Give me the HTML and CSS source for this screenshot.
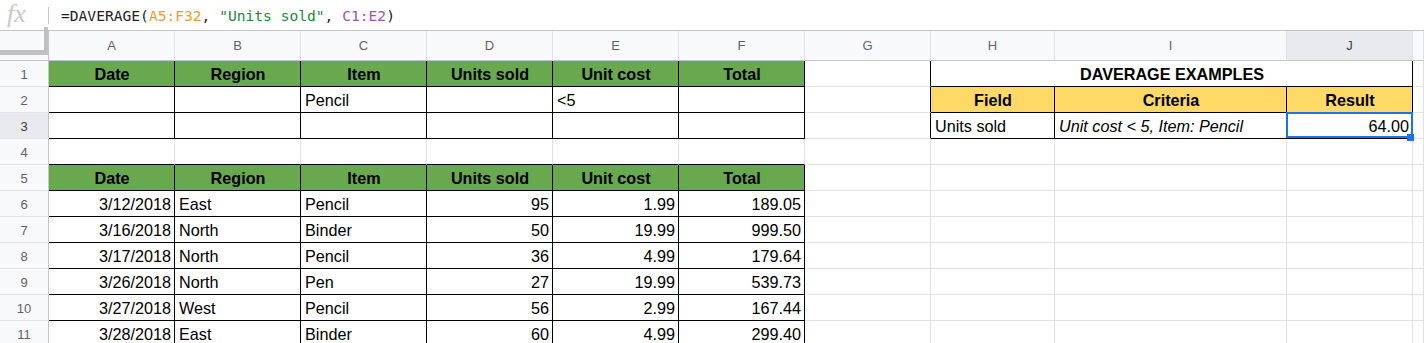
FILE: index.html
```html
<!DOCTYPE html>
<html lang="en">
<head>
  <meta charset="UTF-8" />
  <title>DAVERAGE - Sheet</title>
  <link rel="stylesheet" href="styles.css">
</head>
<body>

  <div id="formulaBar">
    <span class="fx">fx</span>
    <span class="sep"></span>
    <span class="formula">=DAVERAGE(<span class="ref1">A5:F32</span>, <span class="str">"Units sold"</span>, <span class="ref2">C1:E2</span>)</span>
  </div>

  <div id="sheet">
    <!-- column headers -->
    <div class="corner"><div class="freeze"></div></div>
    <div class="ch">A</div><div class="ch">B</div><div class="ch">C</div><div class="ch">D</div>
    <div class="ch">E</div><div class="ch">F</div><div class="ch">G</div><div class="ch">H</div>
    <div class="ch">I</div><div class="ch sel">J</div><div class="ch"></div>

    <!-- row 1 -->
    <div class="rh">1</div>
    <div class="c g bd">Date</div><div class="c g bd">Region</div><div class="c g bd">Item</div>
    <div class="c g bd">Units sold</div><div class="c g bd">Unit cost</div><div class="c g bd">Total</div>
    <div class="c br"></div>
    <div class="c title bd">DAVERAGE EXAMPLES</div>
    <div class="c"></div>

    <!-- row 2 -->
    <div class="rh">2</div>
    <div class="c bd"></div><div class="c bd"></div><div class="c bd">Pencil</div>
    <div class="c bd"></div><div class="c bd">&lt;5</div><div class="c bd"></div>
    <div class="c br"></div>
    <div class="c y bd">Field</div><div class="c y bd">Criteria</div><div class="c y bd">Result</div>
    <div class="c"></div>

    <!-- row 3 -->
    <div class="rh sel">3</div>
    <div class="c bd"></div><div class="c bd"></div><div class="c bd"></div>
    <div class="c bd"></div><div class="c bd"></div><div class="c bd"></div>
    <div class="c br"></div>
    <div class="c bd">Units sold</div>
    <div class="c bd it">Unit cost &lt; 5, Item: Pencil</div>
    <div class="c bd num active">64.00<div class="selbox"></div><div class="handle"></div></div>
    <div class="c"></div>

    <!-- row 4 -->
    <div class="rh">4</div>
    <div class="c bb"></div><div class="c bb"></div><div class="c bb"></div>
    <div class="c bb"></div><div class="c bb"></div><div class="c bb"></div>
    <div class="c"></div><div class="c"></div><div class="c"></div><div class="c"></div><div class="c"></div>

    <!-- row 5 -->
    <div class="rh">5</div>
    <div class="c g bd">Date</div><div class="c g bd">Region</div><div class="c g bd">Item</div>
    <div class="c g bd">Units sold</div><div class="c g bd">Unit cost</div><div class="c g bd">Total</div>
    <div class="c"></div><div class="c"></div><div class="c"></div><div class="c"></div><div class="c"></div>

    <div class="rh">6</div>
    <div class="c bd num">3/12/2018</div><div class="c bd">East</div><div class="c bd">Pencil</div>
    <div class="c bd num">95</div><div class="c bd num">1.99</div><div class="c bd num">189.05</div>
    <div class="c"></div><div class="c"></div><div class="c"></div><div class="c"></div><div class="c"></div>

    <div class="rh">7</div>
    <div class="c bd num">3/16/2018</div><div class="c bd">North</div><div class="c bd">Binder</div>
    <div class="c bd num">50</div><div class="c bd num">19.99</div><div class="c bd num">999.50</div>
    <div class="c"></div><div class="c"></div><div class="c"></div><div class="c"></div><div class="c"></div>

    <div class="rh">8</div>
    <div class="c bd num">3/17/2018</div><div class="c bd">North</div><div class="c bd">Pencil</div>
    <div class="c bd num">36</div><div class="c bd num">4.99</div><div class="c bd num">179.64</div>
    <div class="c"></div><div class="c"></div><div class="c"></div><div class="c"></div><div class="c"></div>

    <div class="rh">9</div>
    <div class="c bd num">3/26/2018</div><div class="c bd">North</div><div class="c bd">Pen</div>
    <div class="c bd num">27</div><div class="c bd num">19.99</div><div class="c bd num">539.73</div>
    <div class="c"></div><div class="c"></div><div class="c"></div><div class="c"></div><div class="c"></div>

    <div class="rh">10</div>
    <div class="c bd num">3/27/2018</div><div class="c bd">West</div><div class="c bd">Pencil</div>
    <div class="c bd num">56</div><div class="c bd num">2.99</div><div class="c bd num">167.44</div>
    <div class="c"></div><div class="c"></div><div class="c"></div><div class="c"></div><div class="c"></div>

    <div class="rh">11</div>
    <div class="c bd num">3/28/2018</div><div class="c bd">East</div><div class="c bd">Binder</div>
    <div class="c bd num">60</div><div class="c bd num">4.99</div><div class="c bd num">299.40</div>
    <div class="c"></div><div class="c"></div><div class="c"></div><div class="c"></div><div class="c"></div>
  </div>

</body>
</html>
```

FILE: styles.css
```css
* {
  box-sizing: border-box;
}

body {
  margin: 0;
  background: #fff;
  font-family: 'Liberation Sans', Arial, sans-serif;
  overflow: hidden;
}

#formulaBar {
  height: 31px;
  display: flex;
  align-items: center;
  border-bottom: 1px solid #c4c7c5;
  background: #fff;
}

.fx {
  width: 40px;
  padding-left: 7px;
  font-family: 'Liberation Serif', serif;
  font-style: italic;
  font-size: 26px;
  color: #c8c8c8;
  line-height: 1;
  margin-top: -3px;
}

.sep {
  width: 1px;
  height: 17px;
  background: #c7c7c7;
  margin-left: 8px;
}

.formula {
  margin-left: 12px;
  font-family: 'DejaVu Sans Mono', 'Liberation Mono', monospace;
  font-size: 14.6px;
  color: #222;
  white-space: pre;
}

.ref1 { color: #f29c2b; }
.str { color: #1a8a3a; }
.ref2 { color: #9c55b5; }

#sheet {
  display: grid;
  grid-template-columns: 49px repeat(7, 126px) 124px 232px 126px 1fr;
  grid-template-rows: 30px;
  grid-auto-rows: 26px;
}

.corner {
  background: #f8f9fa;
  border-bottom: 1px solid #c4c7c5;
  border-right: 1px solid #c4c7c5;
}

.freeze {
  height: 28px;
  margin-top: -4px;
  border-right: 4px solid #c0c0c0;
  border-bottom: 5px solid #c0c0c0;
}

.ch {
  background: #f8f9fa;
  border-right: 1px solid #e1e1e1;
  border-bottom: 1px solid #c4c7c5;
  color: #5f6368;
  font-size: 13px;
  display: flex;
  align-items: center;
  justify-content: center;
}

.ch.sel,
.rh.sel {
  background: #e8eaed;
  color: #3c4043;
}

.rh {
  background: #f8f9fa;
  border-right: 1px solid #c4c7c5;
  border-bottom: 1px solid #e1e1e1;
  color: #5f6368;
  font-size: 13px;
  display: flex;
  align-items: center;
  justify-content: center;
  padding-top: 1px;
}

.c {
  border-right: 1px solid #e2e2e2;
  border-bottom: 1px solid #e2e2e2;
  padding: 2px 3px 0 4px;
  font-size: 16.2px;
  color: #000;
  display: flex;
  align-items: center;
  white-space: nowrap;
  overflow: hidden;
}

.bd {
  border-right-color: #000;
  border-bottom-color: #000;
}

.bb {
  border-bottom-color: #000;
}

.br {
  border-right-color: #000;
}

.g {
  background: #6aa84f;
  font-weight: bold;
  justify-content: center;
}

.y {
  background: #ffd966;
  font-weight: bold;
  justify-content: center;
}

.title {
  grid-column: span 3;
  font-weight: bold;
  justify-content: center;
}

.num {
  justify-content: flex-end;
}

.it {
  font-style: italic;
}

.active {
  position: relative;
  overflow: visible;
}

.selbox {
  position: absolute;
  left: -1px;
  top: -1px;
  right: -1px;
  bottom: 0;
  border: 2px solid #1a73e8;
}

.handle {
  position: absolute;
  left: 120px;
  top: 21px;
  width: 7px;
  height: 7px;
  background: #1a73e8;
}
```
